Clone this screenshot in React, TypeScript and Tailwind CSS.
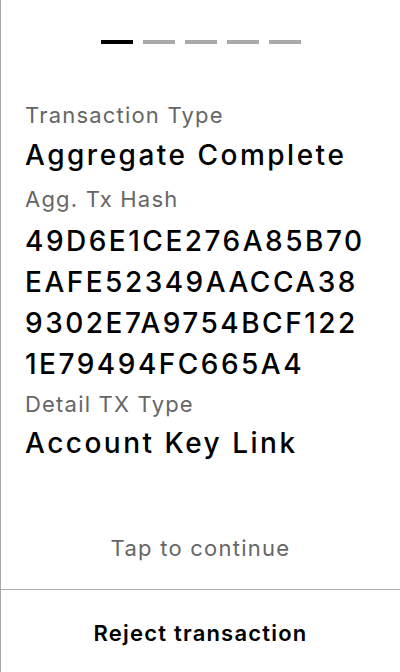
import React from "react"

const hash = ["49D6E1CE276A85B70", "EAFE52349AACCA38", "9302E7A9754BCF122", "1E79494FC665A4"]

function Label({ children, className = "" }: { children: React.ReactNode; className?: string }) {
  return <div className={`text-[22px] leading-[38px] tracking-[1.2px] text-[#666666] ${className}`}>{children}</div>
}

function Value({ children, className = "" }: { children: React.ReactNode; className?: string }) {
  return (
    <div className={`text-[28px] font-medium leading-[41px] tracking-[2.5px] text-black ${className}`}>{children}</div>
  )
}

export default function App() {
  return (
    <div
      className="flex h-[672px] w-[400px] flex-col border-l border-[#aaaaaa] bg-white"
      style={{ fontFamily: "Inter, 'Noto Sans', sans-serif" }}
    >
      <div className="flex justify-center gap-[10px] pt-10">
        <div className="h-1 w-8 bg-black" />
        <div className="h-1 w-8 bg-[#aaaaaa]" />
        <div className="h-1 w-8 bg-[#aaaaaa]" />
        <div className="h-1 w-8 bg-[#aaaaaa]" />
        <div className="h-1 w-8 bg-[#aaaaaa]" />
      </div>

      <div className="flex flex-1 flex-col px-6 pt-[52px]">
        <Label>Transaction Type</Label>
        <Value className="mt-px">Aggregate Complete</Value>
        <Label className="mt-1">Agg. Tx Hash</Label>
        <Value className="mt-[3px]">
          {hash.map((line) => (
            <div key={line}>{line}</div>
          ))}
        </Value>
        <Label>Detail TX Type</Label>
        <Value>Account Key Link</Value>

        <div className="mt-auto pb-[22px] text-center text-[22px] leading-[38px] tracking-[1.25px] text-[#666666]">
          Tap to continue
        </div>
      </div>

      <button className="h-[83px] border-t border-[#aaaaaa] pt-[5px] text-[22px] font-semibold tracking-[1.2px] text-black">
        Reject transaction
      </button>
    </div>
  )
}
